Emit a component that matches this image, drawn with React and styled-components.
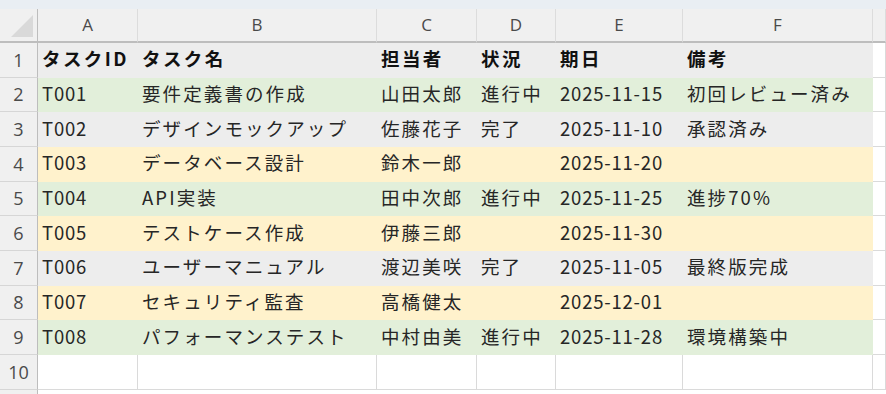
import React from "react";
import styled, { createGlobalStyle } from "styled-components";

const Global = createGlobalStyle`
  html, body { margin: 0; padding: 0; background: #ffffff; }
  body { width: 886px; height: 394px; overflow: hidden; }
`;

const FILL = {
  gray: "#ededed",
  green: "#e2efda",
  yellow: "#fff2cc",
  none: "#ffffff",
};

const Sheet = styled.div`
  width: 886px;
  height: 394px;
  overflow: hidden;
  background: linear-gradient(to right, #f0f0f0 0 37px, #bdbdbd 37px 38px, #ffffff 38px);
  display: flex;
  flex-direction: column;
`;

const TopStrip = styled.div`
  height: 9px;
  flex: none;
  background: #e9eef3;
`;

const Grid = styled.div`
  display: grid;
  grid-template-columns: 38px 100px 239px 100px 79px 127px 190px 1fr;
  grid-template-rows: 34px repeat(10, 34.67px);
  font-family: "Noto Sans CJK JP", "Noto Sans", sans-serif;
`;

const Corner = styled.div`
  position: relative;
  background: #f0f0f0;
  border-right: 1px solid #bdbdbd;
  border-bottom: 2px solid #bdbdbd;
  box-sizing: border-box;
`;

const CornerTriangle = styled.div`
  position: absolute;
  right: 4px;
  bottom: 4px;
  width: 0;
  height: 0;
  border-left: 22px solid transparent;
  border-bottom: 22px solid #d9d9d9;
`;

const ColHeader = styled.div`
  background: #f0f0f0;
  border-right: 1px solid #dcdcdc;
  border-bottom: 2px solid #bdbdbd;
  box-sizing: border-box;
  display: flex;
  align-items: center;
  justify-content: center;
  font-family: "Open Sans", "Noto Sans", sans-serif;
  font-size: 17px;
  color: #4a4a4a;
  padding-bottom: 1px;
`;

const RowHeader = styled.div`
  background: #f0f0f0;
  border-right: 1px solid #bdbdbd;
  border-bottom: 1px solid #d6d6d6;
  box-sizing: border-box;
  display: flex;
  align-items: center;
  justify-content: center;
  font-family: "Open Sans", "Noto Sans", sans-serif;
  font-size: 18px;
  color: #4a4a4a;
`;

const Cell = styled.div`
  background: ${(p) => FILL[p.$fill]};
  border-right: 1px solid ${(p) => (p.$fill === "none" ? "#dadada" : FILL[p.$fill])};
  border-bottom: 1px solid ${(p) => (p.$fill === "none" ? "#dadada" : FILL[p.$fill])};
  box-sizing: border-box;
  display: flex;
  align-items: center;
  padding: 0 0 3px 4px;
  white-space: nowrap;
  overflow: visible;
  font-size: 18.5px;
  letter-spacing: ${(p) => (p.$bold ? "2.4px" : p.$cjk ? "2.1px" : "0.8px")};
  font-weight: ${(p) => (p.$bold ? 700 : 400)};
  color: ${(p) => (p.$bold ? "#111111" : "#262626")};
`;

const columns = ["A", "B", "C", "D", "E", "F", ""];

const rows = [
  { fill: "gray", bold: true, cells: ["タスクID", "タスク名", "担当者", "状況", "期日", "備考"] },
  { fill: "green", cells: ["T001", "要件定義書の作成", "山田太郎", "進行中", "2025-11-15", "初回レビュー済み"] },
  { fill: "gray", cells: ["T002", "デザインモックアップ", "佐藤花子", "完了", "2025-11-10", "承認済み"] },
  { fill: "yellow", cells: ["T003", "データベース設計", "鈴木一郎", "", "2025-11-20", ""] },
  { fill: "green", cells: ["T004", "API実装", "田中次郎", "進行中", "2025-11-25", "進捗70%"] },
  { fill: "yellow", cells: ["T005", "テストケース作成", "伊藤三郎", "", "2025-11-30", ""] },
  { fill: "gray", cells: ["T006", "ユーザーマニュアル", "渡辺美咲", "完了", "2025-11-05", "最終版完成"] },
  { fill: "yellow", cells: ["T007", "セキュリティ監査", "高橋健太", "", "2025-12-01", ""] },
  { fill: "green", cells: ["T008", "パフォーマンステスト", "中村由美", "進行中", "2025-11-28", "環境構築中"] },
  { fill: "none", cells: ["", "", "", "", "", ""] },
];

const isCjk = (s) => /[\u3000-\u9fff\uff00-\uffef]/.test(s);

export default function App() {
  return (
    <>
      <Global />
      <Sheet>
        <TopStrip />
        <Grid>
          <Corner>
            <CornerTriangle />
          </Corner>
          {columns.map((c, i) => (
            <ColHeader key={i}>{c}</ColHeader>
          ))}
          {rows.map((r, ri) => (
            <React.Fragment key={ri}>
              <RowHeader>{ri + 1}</RowHeader>
              {r.cells.map((t, ci) => (
                <Cell key={ci} $fill={r.fill} $bold={r.bold} $cjk={isCjk(t) && ci !== 0}>
                  {t}
                </Cell>
              ))}
              <Cell $fill="none" />
            </React.Fragment>
          ))}
        </Grid>
      </Sheet>
    </>
  );
}
